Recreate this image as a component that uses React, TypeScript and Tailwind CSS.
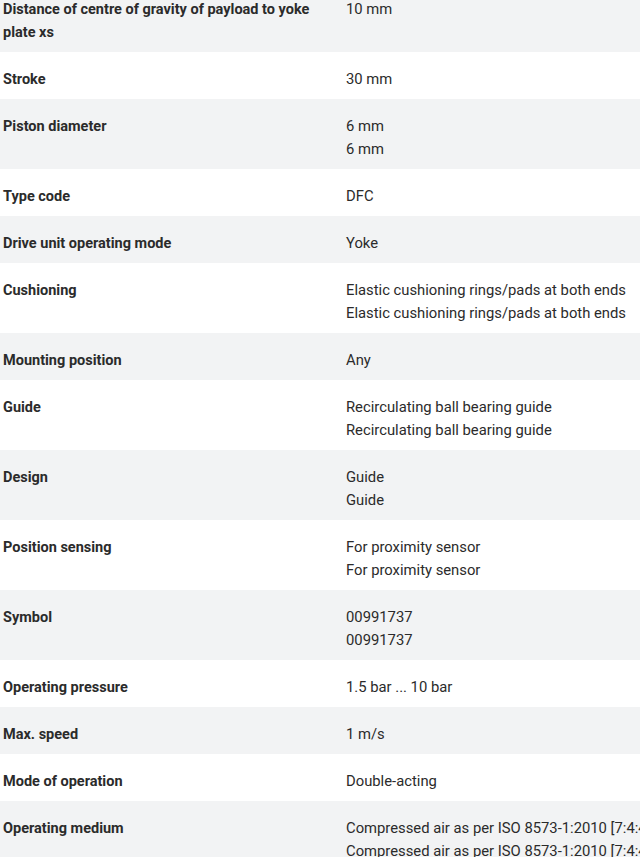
import React from 'react';

type Row = { label: string; values: string[] };

const rows: Row[] = [
  { label: 'Distance of centre of gravity of payload to yoke plate xs', values: ['10 mm'] },
  { label: 'Stroke', values: ['30 mm'] },
  { label: 'Piston diameter', values: ['6 mm', '6 mm'] },
  { label: 'Type code', values: ['DFC'] },
  { label: 'Drive unit operating mode', values: ['Yoke'] },
  { label: 'Cushioning', values: ['Elastic cushioning rings/pads at both ends', 'Elastic cushioning rings/pads at both ends'] },
  { label: 'Mounting position', values: ['Any'] },
  { label: 'Guide', values: ['Recirculating ball bearing guide', 'Recirculating ball bearing guide'] },
  { label: 'Design', values: ['Guide', 'Guide'] },
  { label: 'Position sensing', values: ['For proximity sensor', 'For proximity sensor'] },
  { label: 'Symbol', values: ['00991737', '00991737'] },
  { label: 'Operating pressure', values: ['1.5 bar ... 10 bar'] },
  { label: 'Max. speed', values: ['1 m/s'] },
  { label: 'Mode of operation', values: ['Double-acting'] },
  {
    label: 'Operating medium',
    values: ['Compressed air as per ISO 8573-1:2010 [7:4:4]', 'Compressed air as per ISO 8573-1:2010 [7:4:4]'],
  },
];

export default function App() {
  return (
    <div className="w-[640px] h-[857px] overflow-hidden bg-white text-[#2b2b2b] font-['Roboto',sans-serif] text-[14.8px] leading-[23px]">
      <div className="-mt-[18px]">
        {rows.map((row, i) => (
          <div
            key={row.label}
            className={`grid grid-cols-[346px_1fr] pt-4 pb-2 ${i % 2 === 0 ? 'bg-[#f2f3f4]' : 'bg-white'}`}
          >
            <div className="pl-[3px] pr-4 font-bold text-[14.5px]">{row.label}</div>
            <div className="whitespace-nowrap">
              {row.values.map((v, j) => (
                <div key={j}>{v}</div>
              ))}
            </div>
          </div>
        ))}
      </div>
    </div>
  );
}
